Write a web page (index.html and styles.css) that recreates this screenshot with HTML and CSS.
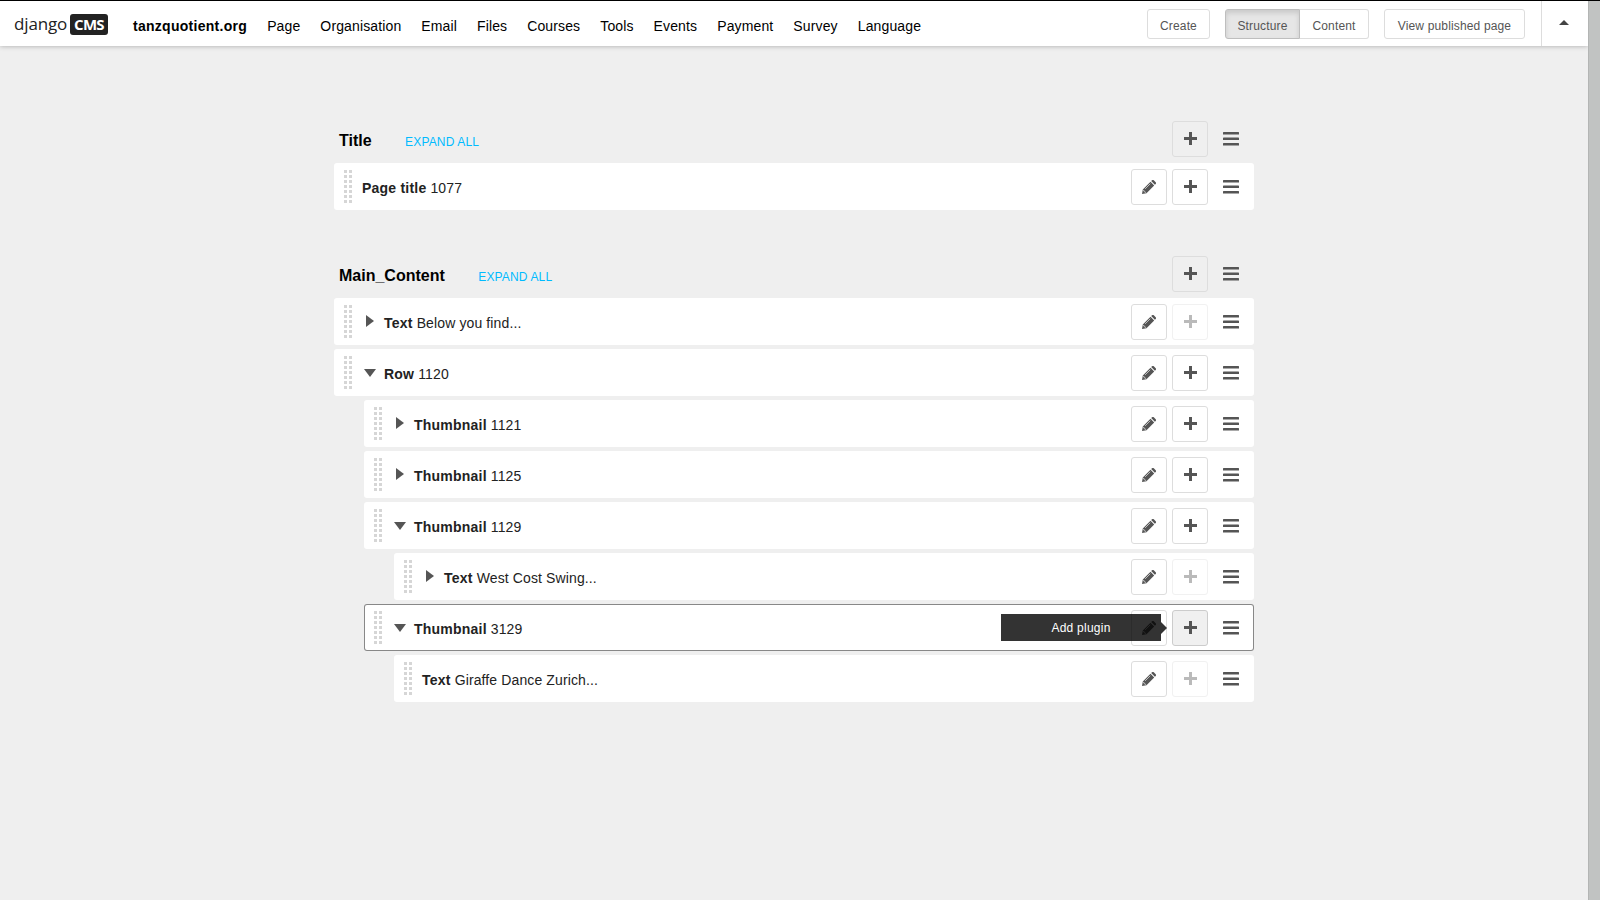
FILE: index.html
```
<!DOCTYPE html>
<html lang="en">
<head>
<meta charset="utf-8">
<title>django CMS</title>
<link rel="stylesheet" href="styles.css">
</head>
<body>
<svg class="defs" aria-hidden="true">
  <symbol id="pencil" viewBox="0 0 14 14"><path d="M0 14l.8-4.5 7.7-7.7 3.7 3.7-7.7 7.7zM9.2 1.1l.8-.8q.9-.7 1.8 0l1.9 1.9q.7.9 0 1.8l-.8.8z"/><path class="shine" d="M1.1 10.4l1 .2.2 1.2 1.2.2.2.8M3.1 8.9l5.2-5.2"/></symbol>
  <symbol id="plus" viewBox="0 0 13 13"><path d="M5 0h3v5h5v3H8v5H5V8H0V5h5z"/></symbol>
  <symbol id="menu" viewBox="0 0 16 14"><path d="M.5 0h15l.5.5v2H0v-2zM.5 5.5h15l.5.5v2H0V6zM.5 11h15l.5.5v2H0v-2z"/></symbol>
</svg>
<div class="app">
  <header class="toolbar">
    <div class="logo"><span class="logo-name">django</span><span class="logo-box">CMS</span></div>
    <nav class="nav">
      <a class="site">tanzquotient.org</a><a>Page</a><a>Organisation</a><a>Email</a><a>Files</a><a>Courses</a><a>Tools</a><a>Events</a><a>Payment</a><a>Survey</a><a>Language</a>
    </nav>
    <div class="actions">
      <a class="button create">Create</a>
      <div class="group"><a class="button structure">Structure</a><a class="button content">Content</a></div>
      <a class="button view">View published page</a>
    </div>
    <div class="toggle"><i class="caret"></i></div>
  </header>
  <main class="board">
    <section class="area">
      <div class="head"><h2>Title</h2><a class="expand">Expand all</a><span class="tools"><span class="btn"><svg class="plus"><use href="#plus"/></svg></span><svg class="menu"><use href="#menu"/></svg></span></div>
      <div class="row"><i class="grip"></i><span class="label"><b>Page title</b> 1077</span><span class="tools"><span class="btn"><svg class="pencil"><use href="#pencil"/></svg></span><span class="btn"><svg class="plus"><use href="#plus"/></svg></span><svg class="menu"><use href="#menu"/></svg></span></div>
    </section>
    <section class="area">
      <div class="head"><h2>Main_Content</h2><a class="expand">Expand all</a><span class="tools"><span class="btn"><svg class="plus"><use href="#plus"/></svg></span><svg class="menu"><use href="#menu"/></svg></span></div>
      <div class="row"><i class="grip"></i><i class="arrow closed"></i><span class="label"><b>Text</b> Below you find...</span><span class="tools"><span class="btn"><svg class="pencil"><use href="#pencil"/></svg></span><span class="btn disabled"><svg class="plus"><use href="#plus"/></svg></span><svg class="menu"><use href="#menu"/></svg></span></div>
      <div class="row"><i class="grip"></i><i class="arrow open"></i><span class="label"><b>Row</b> 1120</span><span class="tools"><span class="btn"><svg class="pencil"><use href="#pencil"/></svg></span><span class="btn"><svg class="plus"><use href="#plus"/></svg></span><svg class="menu"><use href="#menu"/></svg></span></div>
      <div class="row level-1"><i class="grip"></i><i class="arrow closed"></i><span class="label"><b>Thumbnail</b> 1121</span><span class="tools"><span class="btn"><svg class="pencil"><use href="#pencil"/></svg></span><span class="btn"><svg class="plus"><use href="#plus"/></svg></span><svg class="menu"><use href="#menu"/></svg></span></div>
      <div class="row level-1"><i class="grip"></i><i class="arrow closed"></i><span class="label"><b>Thumbnail</b> 1125</span><span class="tools"><span class="btn"><svg class="pencil"><use href="#pencil"/></svg></span><span class="btn"><svg class="plus"><use href="#plus"/></svg></span><svg class="menu"><use href="#menu"/></svg></span></div>
      <div class="row level-1"><i class="grip"></i><i class="arrow open"></i><span class="label"><b>Thumbnail</b> 1129</span><span class="tools"><span class="btn"><svg class="pencil"><use href="#pencil"/></svg></span><span class="btn"><svg class="plus"><use href="#plus"/></svg></span><svg class="menu"><use href="#menu"/></svg></span></div>
      <div class="row level-2"><i class="grip"></i><i class="arrow closed"></i><span class="label"><b>Text</b> West Cost Swing...</span><span class="tools"><span class="btn"><svg class="pencil"><use href="#pencil"/></svg></span><span class="btn disabled"><svg class="plus"><use href="#plus"/></svg></span><svg class="menu"><use href="#menu"/></svg></span></div>
      <div class="row level-1 selected"><i class="grip"></i><i class="arrow open"></i><span class="label"><b>Thumbnail</b> 3129</span><span class="tools"><span class="btn"><svg class="pencil"><use href="#pencil"/></svg></span><span class="btn hover"><svg class="plus"><use href="#plus"/></svg><span class="tooltip">Add plugin</span></span><svg class="menu"><use href="#menu"/></svg></span></div>
      <div class="row level-2"><i class="grip"></i><span class="label"><b>Text</b> Giraffe Dance Zurich...</span><span class="tools"><span class="btn"><svg class="pencil"><use href="#pencil"/></svg></span><span class="btn disabled"><svg class="plus"><use href="#plus"/></svg></span><svg class="menu"><use href="#menu"/></svg></span></div>
    </section>
  </main>
</div>
<div class="scrollbar"></div>
</body>
</html>
```
FILE: styles.css
```
* { box-sizing: border-box; }
body { margin: 0; height: 900px; overflow: hidden; display: flex; border-top: 1px solid #000; background: #efefef; color: #222; font: 14px/20px "Liberation Sans", Arial, sans-serif; }
.defs { position: absolute; width: 0; height: 0; }
.app { flex: 1; }
.scrollbar { width: 12px; background: #c1c3c2; border-left: 1px solid #b3b5b4; }

.toolbar { display: flex; align-items: flex-start; height: 45px; background: #fff; box-shadow: 0 0 5px rgba(0, 0, 0, .3); }
.logo { display: flex; width: 123px; padding: 13px 0 0 14px; color: #222; font-family: "Open Sans", sans-serif; }
.logo-name { width: 56px; font-size: 17px; line-height: 19px; letter-spacing: -.15px; }
.logo-box { width: 38px; height: 21px; border-radius: 3px; background: #222; color: #fff; font-size: 15px; font-weight: 700; line-height: 20px; letter-spacing: -.7px; text-align: center; }
.nav { display: flex; color: #000; padding-top: 15px; }
.nav a { padding: 0 10px; white-space: nowrap; letter-spacing: .13px; }
.nav .site { font-weight: 700; letter-spacing: .28px; }
.actions { display: flex; gap: 15px; margin-left: auto; padding-top: 8px; }
.group { display: flex; }
.button { height: 30px; border: 1px solid #ddd; border-radius: 3px; color: #555; font-size: 12px; line-height: 32px; text-align: center; letter-spacing: .15px; white-space: nowrap; }
.create { width: 63px; }
.structure { width: 75px; background: #e6e6e6; border-color: #bebebe; border-radius: 3px 0 0 3px; box-shadow: inset 0 3px 5px rgba(0, 0, 0, .125); }
.content { width: 69px; border-left: 0; border-radius: 0 3px 3px 0; }
.view { width: 141px; }
.toggle { width: 47px; height: 45px; margin-left: 16px; padding: 19px 0 0 17px; border-left: 1px solid #ddd; }
.caret { display: block; width: 10px; height: 5px; background: #444; clip-path: polygon(50% 0, 100% 100%, 0 100%); }

.board { width: 920px; margin: 75px 0 0 334px; }
.area { display: flex; flex-direction: column; gap: 4px; margin-bottom: 46px; }
.head { display: flex; height: 36px; margin-bottom: 2px; padding-left: 5px; }
.head h2 { margin: 10px 0 0; color: #000; font-size: 16px; line-height: 20px; }
.expand { margin: 11px 0 0 33.5px; color: #0bf; font-size: 12px; line-height: 20px; letter-spacing: .15px; text-transform: uppercase; }
.row { display: flex; height: 47px; padding-left: 10px; border-radius: 3px; background: #fff; }
.level-1 { margin-left: 30px; }
.level-2 { margin-left: 60px; }
.selected { box-shadow: inset 0 0 0 1px #888; }
.grip { width: 8px; height: 33px; margin: 7px 10px 0 0; background: repeating-linear-gradient(90deg, transparent 0 3px, #fff 3px 5px), repeating-linear-gradient(#d6d6d6 0 3px, #fff 3px 5px); }
.arrow { width: 12px; height: 12px; margin: 17px 8px 0 2px; background: #555; }
.closed { clip-path: polygon(2px 0, 10px 50%, 2px 100%); }
.open { clip-path: polygon(0 3px, 100% 3px, 50% 11px); }
.label { margin-top: 15px; white-space: nowrap; letter-spacing: .12px; }
.label b { letter-spacing: .22px; }
.tools { display: flex; gap: 5px; margin-left: auto; padding-right: 15px; fill: #555; }
.row .tools { padding-top: 6px; }
.btn { position: relative; display: flex; width: 36px; height: 36px; padding: 11px 0 0 11px; border: 1px solid #ddd; border-radius: 3px; }
.row .btn { padding-top: 10px; }
.disabled { opacity: .4; }
.hover { background: #f0f0f0; border-color: #ccc; }
.head .plus { margin-top: -1px; }
.plus { width: 13px; height: 13px; }
.pencil { width: 14px; height: 14px; margin-left: -1px; }
.shine { fill: none; stroke: #ccc; stroke-width: .9; }
.menu { width: 16px; height: 14px; margin: 11px 0 0 10px; }
.tooltip { position: absolute; right: 46px; top: 3px; width: 160px; height: 27px; background: rgba(0, 0, 0, .8); color: #fff; font-size: 12px; line-height: 28px; letter-spacing: .25px; text-align: center; }
.tooltip::after { content: ""; position: absolute; left: 100%; top: 8px; border: 6px solid transparent; border-right: 0; border-left-color: rgba(0, 0, 0, .8); }
```
